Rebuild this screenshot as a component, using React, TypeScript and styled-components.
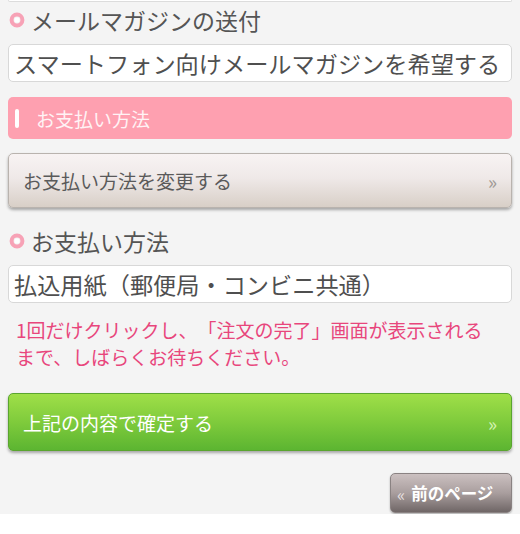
import React from 'react';
import styled, { createGlobalStyle } from 'styled-components';

const GlobalStyle = createGlobalStyle`
  body {
    margin: 0;
    background: #ffffff;
    font-family: "Noto Sans CJK JP", "Noto Sans", sans-serif;
    text-spacing-trim: space-all;
  }
`;

const Page = styled.div`
  background: #f4f4f4;
  padding: 0 8px 1px;
  display: flex;
  flex-direction: column;
`;

const PrevEdge = styled.div`
  height: 1px;
  background: #ffffff;
  border: 1px solid #dcdcdc;
  border-top: none;
  border-radius: 0 0 5px 5px;
`;

const Heading = styled.h2<{ $top: number }>`
  margin: ${p => p.$top}px 0 0;
  height: 36px;
  display: flex;
  align-items: center;
  gap: 6px;
  padding-left: 1px;
  font-size: 23px;
  font-weight: normal;
  color: #555555;
`;

const Field = styled.div`
  margin-top: 6px;
  height: 38px;
  box-sizing: border-box;
  background: #ffffff;
  border: 1px solid #d8d8d8;
  border-radius: 5px;
  display: flex;
  align-items: center;
  padding-left: 5px;
  font-size: 23.2px;
  color: #4f4f4f;
  white-space: nowrap;
  overflow: hidden;
`;

const SectionBar = styled.div`
  margin-top: 15px;
  height: 42px;
  background: #fea0b0;
  border-radius: 5px;
  display: flex;
  align-items: center;
  gap: 17px;
  padding-left: 7px;
  font-size: 19px;
  color: #fff3f5;
`;

const BarMark = styled.span`
  width: 4px;
  height: 19px;
  border-radius: 2px;
  background: #ffffff;
`;

const Button = styled.button<{ $variant: 'plain' | 'go' }>`
  margin-top: ${p => (p.$variant === 'plain' ? 14 : 23)}px;
  height: ${p => (p.$variant === 'plain' ? 55 : 58)}px;
  box-sizing: border-box;
  width: 100%;
  display: flex;
  align-items: center;
  justify-content: space-between;
  padding: 0 14px 0 14px;
  font-family: inherit;
  font-size: 19px;
  text-align: left;
  border-radius: 5px;
  cursor: pointer;
  box-shadow: 0 2px 3px rgba(0, 0, 0, 0.32);
  ${p =>
    p.$variant === 'plain'
      ? `
    color: #5a5a5a;
    background: linear-gradient(#f8f3f3 0%, #efe9e8 45%, #d8cfc7 100%);
    border: 1px solid #b9b3ae;
  `
      : `
    color: #ffffff;
    background: linear-gradient(#9fdf48 0%, #7fcb3c 50%, #5cb531 100%);
    border: 1px solid #5aa52f;
  `}
`;

const Chevron = styled.span<{ $light?: boolean }>`
  font-size: 19px;
  color: ${p => (p.$light ? '#d2f2b0' : '#a09a96')};
`;

const Notice = styled.p`
  margin: 13px 0 0;
  padding-left: 8px;
  font-size: 19px;
  line-height: 27px;
  color: #e8467c;
`;

const BackRow = styled.div`
  margin-top: 22px;
  display: flex;
  justify-content: flex-end;
`;

const BackButton = styled.button`
  width: 122px;
  height: 40px;
  box-sizing: border-box;
  display: flex;
  align-items: center;
  gap: 6px;
  padding: 0 0 0 6px;
  border: 1px solid #8a8282;
  border-radius: 5px;
  background: linear-gradient(#cbc0c0 0%, #a99e9e 50%, #6f6666 100%);
  box-shadow: 0 1px 2px rgba(0, 0, 0, 0.3);
  font-family: inherit;
  font-size: 16.5px;
  font-weight: bold;
  color: #ffffff;
  cursor: pointer;
`;

const BackMark = styled.span`
  font-size: 17px;
  font-weight: normal;
  color: #e8e2e2;
`;

const Dot = () => (
  <svg width="16" height="16" viewBox="0 0 16 16">
    <circle cx="8" cy="8" r="5.4" fill="none" stroke="#f7a2b6" strokeWidth="4" />
    <circle cx="8" cy="8" r="2.5" fill="#ffffff" />
  </svg>
);

export default function App() {
  return (
    <>
      <GlobalStyle />
      <Page>
        <PrevEdge />
        <Heading $top={0}>
          <Dot />
          メールマガジンの送付
        </Heading>
        <Field>スマートフォン向けメールマガジンを希望する</Field>

        <SectionBar>
          <BarMark />
          お支払い方法
        </SectionBar>
        <Button $variant="plain">
          お支払い方法を変更する
          <Chevron>»</Chevron>
        </Button>

        <Heading $top={15}>
          <Dot />
          お支払い方法
        </Heading>
        <Field>払込用紙（郵便局・コンビニ共通）</Field>

        <Notice>
          1回だけクリックし、「注文の完了」画面が表示される
          <br />
          まで、しばらくお待ちください。
        </Notice>

        <Button $variant="go">
          上記の内容で確定する
          <Chevron $light>»</Chevron>
        </Button>

        <BackRow>
          <BackButton>
            <BackMark>«</BackMark>
            前のページ
          </BackButton>
        </BackRow>
      </Page>
    </>
  );
}
